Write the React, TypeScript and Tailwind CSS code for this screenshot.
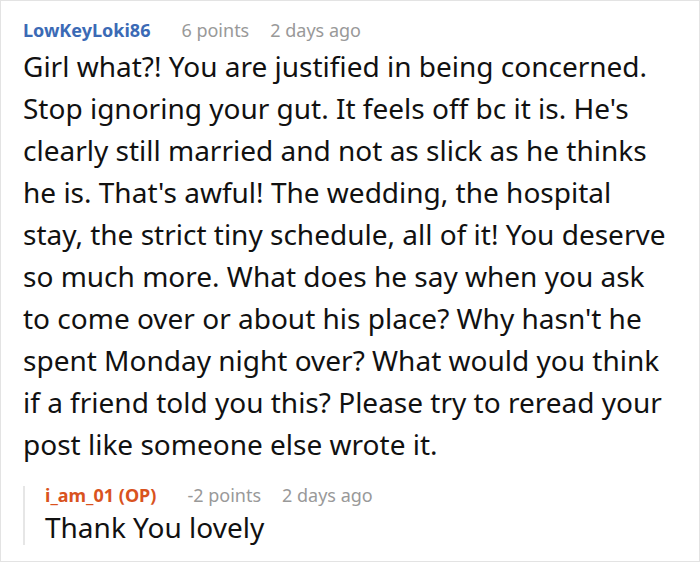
import React from 'react';

const font = { fontFamily: '"Noto Sans", "Open Sans", sans-serif' };

function Meta({ name, nameColor, points, tight }: { name: string; nameColor: string; points: string; tight?: boolean }) {
  return (
    <div className={`flex items-baseline text-[18px] ${tight ? 'leading-[18px]' : 'leading-[24px]'}`}>
      <span className={`font-bold ${nameColor}`}>{name}</span>
      <span className="ml-[31px] text-[#999999]">{points}</span>
      <span className="ml-[21px] text-[#999999]">2 days ago</span>
    </div>
  );
}

export default function App() {
  return (
    <div className="w-[700px] h-[562px] bg-white border border-[#e3e3e3] overflow-hidden" style={font}>
      <div className="pl-[22px] pr-[28px] pt-[17px]">
        <Meta name="LowKeyLoki86" nameColor="text-[#3b6ab5]" points="6 points" />
        <p className="mt-[3px] text-[28px] leading-[42px] text-[#111111]">
          Girl what?! You are justified in being concerned. Stop ignoring your gut. It feels off bc it is. He's clearly
          still married and not as slick as he thinks he is. That's awful! The wedding, the hospital stay, the strict
          tiny schedule, all of it! You deserve so much more. What does he say when you ask to come over or about his
          place? Why hasn't he spent Monday night over? What would you think if a friend told you this? Please try to
          reread your post like someone else wrote it.
        </p>
        <div className="mt-[21px] border-l-2 border-[#e6e6e6] pl-5">
          <Meta name="i_am_01 (OP)" nameColor="text-[#d9531e]" points="-2 points" tight />
          <p className="mt-[5px] text-[28px] leading-[36px] text-[#111111]">Thank You lovely</p>
        </div>
      </div>
    </div>
  );
}
